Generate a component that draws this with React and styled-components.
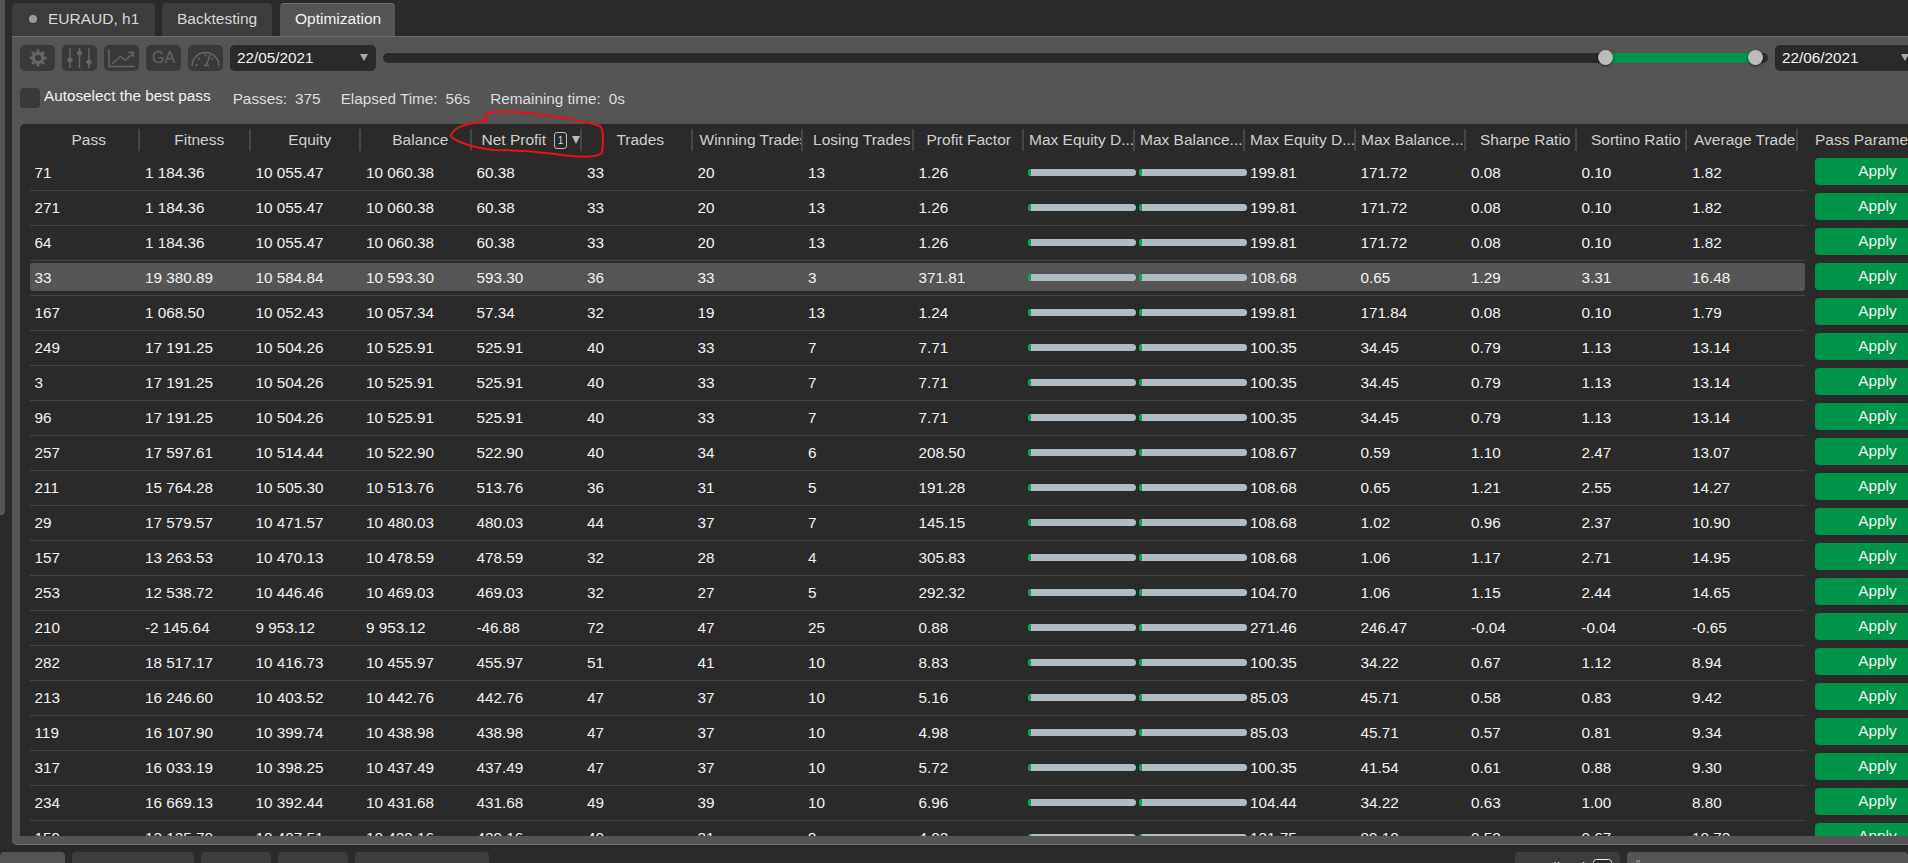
import React from "react";
import styled, { createGlobalStyle } from "styled-components";

const GlobalStyle = createGlobalStyle`
  html, body {
    margin: 0;
    height: 100%;
    overflow: hidden;
    background: #2a2a2a;
    font-family: "Liberation Sans", Arial, sans-serif;
    font-size: 15.3px;
    color: #f2f2f2;
  }
`;

const Page = styled.div`
  position: relative;
  width: 1908px;
  height: 863px;
  overflow: hidden;
  display: flex;
  flex-direction: column;
`;

const Upper = styled.div`
  display: flex;
  height: 845px;
`;

const LeftStrip = styled.div`
  width: 5px;
  height: 515px;
  background: #555;
  border-bottom-right-radius: 4px;
  flex: none;
`;

const Main = styled.div`
  margin-left: 7px;
  width: 1896px;
  padding-top: 3px;
  display: flex;
  flex-direction: column;
  box-sizing: border-box;
`;

const Tabs = styled.div`
  display: flex;
  height: 33px;
  font-size: 15.5px;
`;

const Tab = styled.div`
  display: flex;
  align-items: center;
  gap: 11px;
  box-sizing: border-box;
  width: ${(p) => p.$width}px;
  margin-right: ${(p) => p.$gap}px;
  padding-left: ${(p) => p.$pad}px;
  background: ${(p) => (p.$active ? "#555" : "#3c3c3c")};
  border-top: 1px solid ${(p) => (p.$active ? "#6e6e6e" : "#3c3c3c")};
  border-radius: 4px 4px 0 0;
  color: ${(p) => (p.$active ? "#f2f2f2" : "#d8d8d8")};
  padding-bottom: 2px;
`;

const Dot = styled.span`
  width: 8px;
  height: 8px;
  border-radius: 50%;
  background: #999;
`;

const Panel = styled.div`
  flex: 1;
  min-height: 0;
  background: #555;
  border-top: 1px solid #6e6e6e;
  border-bottom: 1px solid #707070;
  border-bottom-left-radius: 5px;
  box-sizing: border-box;
  padding: 8px 0 8px 8px;
  display: flex;
  flex-direction: column;
`;

const Toolbar = styled.div`
  display: flex;
  align-items: center;
  height: 26px;
  gap: 7px;
  flex: none;
`;

const IconButton = styled.div`
  width: 35px;
  height: 26px;
  flex: none;
  border-radius: 5px;
  background: #3a3a3a;
  color: #666;
  display: flex;
  align-items: center;
  justify-content: center;
  font-size: 16px;
`;

const DateSelect = styled.div`
  position: relative;
  flex: none;
  width: ${(p) => p.$width}px;
  height: 26px;
  box-sizing: border-box;
  padding-left: 7px;
  border-radius: 5px;
  background: #2a2a2a;
  display: flex;
  align-items: center;
  color: #f2f2f2;

  &::after {
    content: "";
    position: absolute;
    right: 8px;
    top: 9px;
    border-left: 4px solid transparent;
    border-right: 4px solid transparent;
    border-top: 7px solid #aaa;
  }
`;

const Track = styled.div`
  position: relative;
  flex: none;
  width: 1385px;
  height: 10px;
  border-radius: 5px;
  background: #2a2a2a;
`;

const TrackFill = styled.div`
  position: absolute;
  left: 1222px;
  width: 150px;
  top: 0;
  bottom: 0;
  background: #00934a;
`;

const Thumb = styled.div`
  position: absolute;
  left: ${(p) => p.$left}px;
  top: -3px;
  width: 15px;
  height: 15px;
  border-radius: 50%;
  background: #bcbcbc;
  box-shadow: 0 1px 3px rgba(0, 0, 0, 0.6);
`;

const InfoRow = styled.div`
  display: flex;
  align-items: center;
  height: 20px;
  margin-top: 17px;
  margin-bottom: 16px;
  flex: none;
`;

const Checkbox = styled.div`
  width: 20px;
  height: 20px;
  border-radius: 4px;
  background: #3a3a3a;
  margin-right: 4px;
`;

const CheckLabel = styled.span`
  color: #f2f2f2;
  margin-right: 22px;
  padding-bottom: 4px;
`;

const Stat = styled.span`
  display: flex;
  gap: 8px;
  margin-right: 20px;
  padding-top: 1px;
  color: #dcdcdc;
`;

const Table = styled.div`
  flex: 1;
  min-height: 0;
  overflow: hidden;
  background: #2a2a2a;
  border-top-left-radius: 5px;
`;

const HeaderRow = styled.div`
  display: flex;
  height: 32px;
  padding-left: 9.5px;
  align-items: center;
  font-size: 15.5px;
`;

const HeaderCells = styled.div`
  display: grid;
  grid-template-columns: repeat(16, 110.5px);
  width: 1768px;
  padding-right: 7.5px;
`;

const HeaderCell = styled.div`
  height: 22px;
  line-height: 22px;
  box-sizing: border-box;
  padding: 0 ${(p) => p.$right ?? 3}px 0 ${(p) => p.$left ?? 13}px;
  border-right: 2px solid #454545;
  color: #cfcfcf;
  white-space: nowrap;
  overflow: hidden;
  text-align: center;
`;

const SortedCell = styled(HeaderCell)`
  display: flex;
  align-items: center;
  padding: 0 0 0 10px;
`;

const SortBadge = styled.span`
  width: 13px;
  height: 17px;
  margin-left: 8px;
  box-sizing: border-box;
  border: 1px solid #bbb;
  border-radius: 3px;
  color: #ddd;
  font-size: 10px;
  line-height: 15px;
  text-align: center;
`;

const SortArrow = styled.span`
  width: 0;
  height: 0;
  margin-left: 5px;
  border-left: 4px solid transparent;
  border-right: 4px solid transparent;
  border-top: 8px solid #bbb;
`;

const ParamsHeader = styled.div`
  margin-left: 10px;
  white-space: nowrap;
  color: #cfcfcf;
`;

const Row = styled.div`
  display: flex;
  height: 35px;
  padding-left: 9.5px;
`;

const RowCells = styled.div`
  width: 1775.5px;
  flex: none;
  height: 35px;
  box-sizing: border-box;
  padding: 2px 0 4px;
  border-bottom: 1px solid #454545;
`;

const RowInner = styled.div`
  display: grid;
  grid-template-columns: repeat(16, 110.5px);
  height: 28px;
  align-items: center;
  border-radius: 3px;
  background: ${(p) => (p.$selected ? "#555" : "transparent")};
`;

const Cell = styled.div`
  padding: 1px 0 0 5px;
  white-space: nowrap;
  overflow: hidden;
`;

const BarCell = styled.div`
  padding-left: 4px;
`;

const Bar = styled.div`
  width: 108px;
  height: 7px;
  border-radius: 4px;
  overflow: hidden;
  background: #b0bcc3;
`;

const BarFill = styled.div`
  width: 3px;
  height: 100%;
  background: #00a651;
`;

const ApplyButton = styled.div`
  flex: none;
  margin: 2px 0 0 10px;
  width: 130px;
  height: 27px;
  padding-right: 5px;
  box-sizing: border-box;
  border-radius: 4px;
  background: #00934a;
  color: #f2f2f2;
  text-align: center;
  line-height: 25px;
`;

const BottomBar = styled.div`
  display: flex;
  height: 11px;
  margin-top: 7px;
  gap: 7px;
  overflow: hidden;
`;

const BottomTab = styled.div`
  width: ${(p) => p.$width}px;
  flex: none;
  background: ${(p) => (p.$active ? "#555" : "#3c3c3c")};
  border-radius: 4px 4px 0 0;
`;

const FeedbackButton = styled.div`
  margin-left: auto;
  width: 105px;
  flex: none;
  box-sizing: border-box;
  padding: 7px 0 0 7px;
  background: #3c3c3c;
  border-radius: 4px 4px 0 0;
  display: flex;
  gap: 4px;
  color: #ddd;
  line-height: 17px;
`;

const SearchBox = styled.div`
  width: 281px;
  flex: none;
  box-sizing: border-box;
  padding: 6px 0 0 9px;
  background: #555;
  border-radius: 4px 4px 0 0;
  color: #aaa;
  font-size: 12px;
`;

const Annotation = styled.svg`
  position: absolute;
  left: 0;
  top: 0;
  pointer-events: none;
`;

const GearIcon = () => (
  <svg width="20" height="20" viewBox="0 0 20 20" fill="none">
    <circle cx="10" cy="10" r="4.6" stroke="currentColor" strokeWidth="3.2" />
    {[0, 45, 90, 135, 180, 225, 270, 315].map((a) => (
      <rect key={a} x="8.6" y="1.5" width="2.8" height="3.5" fill="currentColor" transform={`rotate(${a} 10 10)`} />
    ))}
  </svg>
);

const SlidersIcon = () => (
  <svg width="35" height="26" viewBox="0 0 35 26" fill="currentColor" stroke="currentColor">
    <path d="M8 3v20M17.5 3v20M27 3v20" strokeWidth="1.5" />
    <path d="M8 11.5l3.2 3.5L8 18.5 4.8 15zM17.5 4.5L20.7 8l-3.2 3.5L14.3 8zM27 13.5l3.2 3.5-3.2 3.5-3.2-3.5z" stroke="none" />
  </svg>
);

const ChartIcon = () => (
  <svg width="35" height="26" viewBox="0 0 35 26" fill="none" stroke="currentColor" strokeWidth="1.5">
    <path d="M5 4v17.5h26" />
    <path d="M8 19l8.5-7.5 4.5 3.5 7.5-6" />
    <path d="M24.5 7.5l5-.5-.5 5" />
  </svg>
);

const GaugeIcon = () => (
  <svg width="35" height="26" viewBox="0 0 35 26" fill="none" stroke="currentColor" strokeWidth="1.5">
    <path d="M4 21a13.5 13.5 0 0 1 27 0" />
    <path d="M7.5 20h2.5M10 13l2 1.5M17.5 8.5v3M25 13l-2 1.5" />
    <path d="M22 10l-3.5 10" />
    <path d="M16 20.5h5" />
  </svg>
);

// a small red/green flag sits in the cut off Feedback button
const FlagIcon = () => (
  <svg width="19" height="12" viewBox="0 0 19 12">
    <rect x="0.5" y="0.5" width="18" height="14" rx="3" fill="#2a2a2a" stroke="#eee" />
    <path d="M3 4h6v5H3z" fill="#0a8a3c" />
    <path d="M10 4h6v5h-6z" fill="#d01c1c" />
  </svg>
);

const HEADERS = [
  { t: "Pass" },
  { t: "Fitness" },
  { t: "Equity" },
  { t: "Balance" },
  { sorted: true },
  { t: "Trades", left: 11 },
  { t: "Winning Trades", left: 7, right: 0 },
  { t: "Losing Trades", left: 9, right: 0 },
  { t: "Profit Factor", left: 8, right: 6 },
  { t: "Max Equity D...", left: 5, right: 0 },
  { t: "Max Balance...", left: 5, right: 0 },
  { t: "Max Equity D...", left: 5, right: 0 },
  { t: "Max Balance...", left: 5, right: 0 },
  { t: "Sharpe Ratio" },
  { t: "Sortino Ratio" },
  { t: "Average Trade", left: 7, right: 0 },
];

const ROWS = [
  ["71", "1 184.36", "10 055.47", "10 060.38", "60.38", "33", "20", "13", "1.26", "199.81", "171.72", "0.08", "0.10", "1.82"],
  ["271", "1 184.36", "10 055.47", "10 060.38", "60.38", "33", "20", "13", "1.26", "199.81", "171.72", "0.08", "0.10", "1.82"],
  ["64", "1 184.36", "10 055.47", "10 060.38", "60.38", "33", "20", "13", "1.26", "199.81", "171.72", "0.08", "0.10", "1.82"],
  ["33", "19 380.89", "10 584.84", "10 593.30", "593.30", "36", "33", "3", "371.81", "108.68", "0.65", "1.29", "3.31", "16.48"],
  ["167", "1 068.50", "10 052.43", "10 057.34", "57.34", "32", "19", "13", "1.24", "199.81", "171.84", "0.08", "0.10", "1.79"],
  ["249", "17 191.25", "10 504.26", "10 525.91", "525.91", "40", "33", "7", "7.71", "100.35", "34.45", "0.79", "1.13", "13.14"],
  ["3", "17 191.25", "10 504.26", "10 525.91", "525.91", "40", "33", "7", "7.71", "100.35", "34.45", "0.79", "1.13", "13.14"],
  ["96", "17 191.25", "10 504.26", "10 525.91", "525.91", "40", "33", "7", "7.71", "100.35", "34.45", "0.79", "1.13", "13.14"],
  ["257", "17 597.61", "10 514.44", "10 522.90", "522.90", "40", "34", "6", "208.50", "108.67", "0.59", "1.10", "2.47", "13.07"],
  ["211", "15 764.28", "10 505.30", "10 513.76", "513.76", "36", "31", "5", "191.28", "108.68", "0.65", "1.21", "2.55", "14.27"],
  ["29", "17 579.57", "10 471.57", "10 480.03", "480.03", "44", "37", "7", "145.15", "108.68", "1.02", "0.96", "2.37", "10.90"],
  ["157", "13 263.53", "10 470.13", "10 478.59", "478.59", "32", "28", "4", "305.83", "108.68", "1.06", "1.17", "2.71", "14.95"],
  ["253", "12 538.72", "10 446.46", "10 469.03", "469.03", "32", "27", "5", "292.32", "104.70", "1.06", "1.15", "2.44", "14.65"],
  ["210", "-2 145.64", "9 953.12", "9 953.12", "-46.88", "72", "47", "25", "0.88", "271.46", "246.47", "-0.04", "-0.04", "-0.65"],
  ["282", "18 517.17", "10 416.73", "10 455.97", "455.97", "51", "41", "10", "8.83", "100.35", "34.22", "0.67", "1.12", "8.94"],
  ["213", "16 246.60", "10 403.52", "10 442.76", "442.76", "47", "37", "10", "5.16", "85.03", "45.71", "0.58", "0.83", "9.42"],
  ["119", "16 107.90", "10 399.74", "10 438.98", "438.98", "47", "37", "10", "4.98", "85.03", "45.71", "0.57", "0.81", "9.34"],
  ["317", "16 033.19", "10 398.25", "10 437.49", "437.49", "47", "37", "10", "5.72", "100.35", "41.54", "0.61", "0.88", "9.30"],
  ["234", "16 669.13", "10 392.44", "10 431.68", "431.68", "49", "39", "10", "6.96", "104.44", "34.22", "0.63", "1.00", "8.80"],
  ["159", "13 125.70", "10 407.51", "10 429.16", "429.16", "40", "31", "9", "4.02", "131.75", "89.10", "0.52", "0.67", "10.72"],
];

const BOTTOM_TABS = [65, 122, 70, 70, 134];

const SCRIBBLE =
  "M488 120 C483 118 481 114 494 112 C505 111 530 113 551 116 C565 118 585 121 600 126 C604 130 603 145 602 153 C596 158 575 157 555 154 C540 152 510 150 494 150 C484 149 472 147 460 142 C454 139 450 137 451 135 C453 130 458 127 465 125 C473 123 481 122 488 120";

const App = () => {
  return (
    <>
      <GlobalStyle />
      <Page>
        <Upper>
          <LeftStrip />
          <Main>
            <Tabs>
              <Tab $width={143} $gap={7} $pad={17}>
                <Dot />
                EURAUD, h1
              </Tab>
              <Tab $width={110} $gap={8} $pad={15}>Backtesting</Tab>
              <Tab $width={115} $gap={0} $pad={15} $active>Optimization</Tab>
            </Tabs>
            <Panel>
              <Toolbar>
                <IconButton><GearIcon /></IconButton>
                <IconButton><SlidersIcon /></IconButton>
                <IconButton><ChartIcon /></IconButton>
                <IconButton>GA</IconButton>
                <IconButton><GaugeIcon /></IconButton>
                <DateSelect $width={146}>22/05/2021</DateSelect>
                <Track>
                  <TrackFill />
                  <Thumb $left={1215} />
                  <Thumb $left={1365} />
                </Track>
                <DateSelect $width={142}>22/06/2021</DateSelect>
              </Toolbar>
              <InfoRow>
                <Checkbox />
                <CheckLabel>Autoselect the best pass</CheckLabel>
                <Stat><span>Passes:</span><span>375</span></Stat>
                <Stat><span>Elapsed Time:</span><span>56s</span></Stat>
                <Stat><span>Remaining time:</span><span>0s</span></Stat>
              </InfoRow>
              <Table>
                <HeaderRow>
                  <HeaderCells>
                    {HEADERS.map((h, i) =>
                      h.sorted ? (
                        <SortedCell key={i}>
                          Net Profit
                          <SortBadge>1</SortBadge>
                          <SortArrow />
                        </SortedCell>
                      ) : (
                        <HeaderCell key={i} $left={h.left} $right={h.right}>{h.t}</HeaderCell>
                      )
                    )}
                  </HeaderCells>
                  <ParamsHeader>Pass Parameters</ParamsHeader>
                </HeaderRow>
                {ROWS.map((r, i) => (
                  <Row key={i}>
                    <RowCells>
                      <RowInner $selected={r[0] === "33"}>
                        {r.slice(0, 9).map((v, j) => (
                          <Cell key={j}>{v}</Cell>
                        ))}
                        <BarCell><Bar><BarFill /></Bar></BarCell>
                        <BarCell><Bar><BarFill /></Bar></BarCell>
                        {r.slice(9).map((v, j) => (
                          <Cell key={j}>{v}</Cell>
                        ))}
                      </RowInner>
                    </RowCells>
                    <ApplyButton>Apply</ApplyButton>
                  </Row>
                ))}
              </Table>
            </Panel>
          </Main>
        </Upper>
        <BottomBar>
          {BOTTOM_TABS.map((w, i) => (
            <BottomTab key={i} $width={w} $active={i === 0} />
          ))}
          <FeedbackButton>Feedback <FlagIcon /></FeedbackButton>
          <SearchBox>"</SearchBox>
        </BottomBar>
        <Annotation width="1908" height="863" viewBox="0 0 1908 863" fill="none">
          <path d={SCRIBBLE} stroke="#e8101a" strokeWidth="2" strokeLinejoin="round" strokeLinecap="round" />
        </Annotation>
      </Page>
    </>
  );
};

export default App;
